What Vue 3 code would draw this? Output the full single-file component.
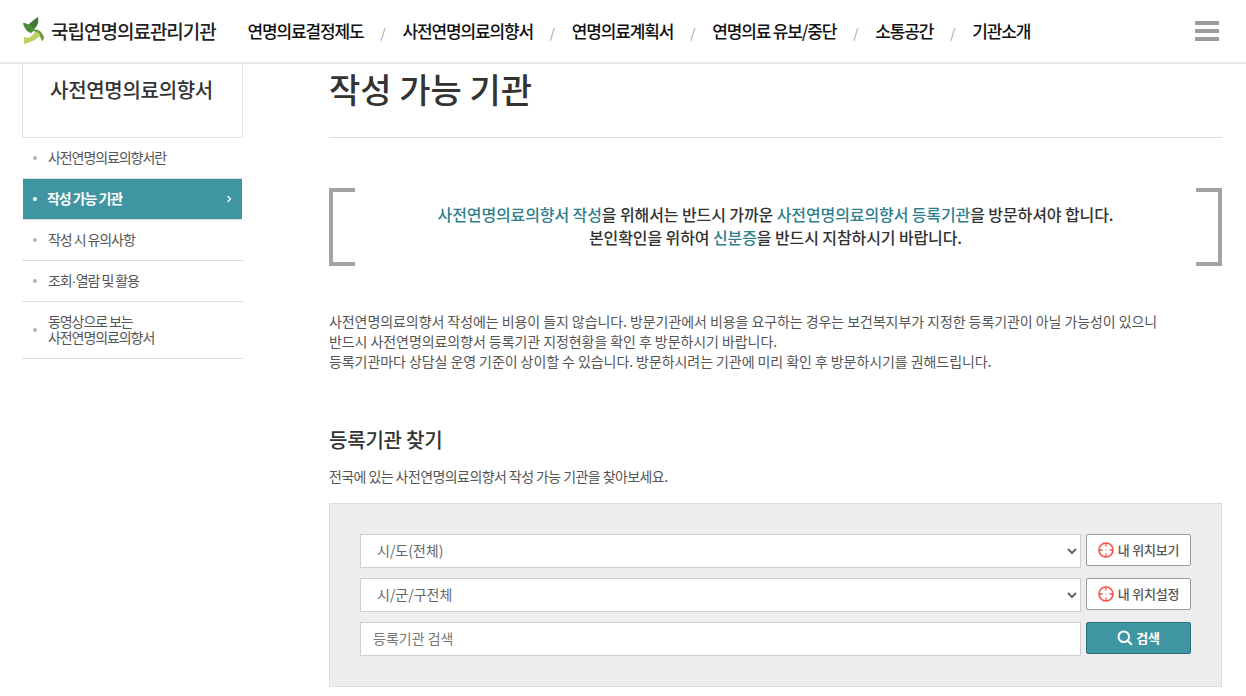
<script setup>
const nav = ['연명의료결정제도', '사전연명의료의향서', '연명의료계획서', '연명의료 유보/중단', '소통공간', '기관소개']
const side = [
  { t: '사전연명의료의향서란' },
  { t: '작성 가능 기관', on: true },
  { t: '작성 시 유의사항' },
  { t: '조회', mid: '·', rest: '열람 및 활용' },
  { t: '동영상으로 보는\n사전연명의료의향서' }
]
</script>

<template>
  <div class="page">
    <header class="hd">
      <div class="logo">
        <svg class="mark" width="22" height="28" viewBox="0 0 22 28">
          <path d="M15 0C16 4 15 9 11 12C9 11 7 10 5 9C7 5 11 3 15 0z" fill="#3f7a35" />
          <path d="M0 6C4 6 9 8 12 13L8 16C4 15 1 11 0 6z" fill="#4f8a3a" />
          <path d="M10 13C14 11 19 14 21 20C21 22 20 24 19 24C18 20 15 17 10 13z" fill="#6f9a3e" />
          <path d="M1 27V20C5 22 9 20 12 15C15 15 17 16 17 18C14 23 8 25 1 27z" fill="#bfd264" />
        </svg>
        <span>국립연명의료관리기관</span>
      </div>
      <nav class="nav">
        <template v-for="(n, i) in nav" :key="n">
          <a>{{ n }}</a>
          <i v-if="i < nav.length - 1">/</i>
        </template>
      </nav>
      <div class="burger"><b></b><b></b><b></b></div>
    </header>

    <div class="body">
      <aside class="side">
        <h2>사전연명의료의향서</h2>
        <ul>
          <li v-for="s in side" :key="s.t" :class="{ on: s.on }">
            <span class="dot"></span>
            <span class="lbl">{{ s.t }}<span v-if="s.mid" class="mid">{{ s.mid }}</span>{{ s.rest }}</span>
            <svg v-if="s.on" class="chev" width="6" height="8" viewBox="0 0 6 8"><path d="M1.5 1l3 3-3 3" fill="none" stroke="#fff" stroke-width="1.3" /></svg>
          </li>
        </ul>
      </aside>

      <main class="main">
        <h1>작성 가능 기관</h1>
        <section class="notice">
          <p><em>사전연명의료의향서 작성</em>을 위해서는 반드시 가까운 <em>사전연명의료의향서 등록기관</em>을 방문하셔야 합니다.</p>
          <p>본인확인을 위하여 <em>신분증</em>을 반드시 지참하시기 바랍니다.</p>
        </section>
        <p class="desc">사전연명의료의향서 작성에는 비용이 들지 않습니다. 방문기관에서 비용을 요구하는 경우는 보건복지부가 지정한 등록기관이 아닐 가능성이 있으니<br>반드시 사전연명의료의향서 등록기관 지정현황을 확인 후 방문하시기 바랍니다.<br>등록기관마다 상담실 운영 기준이 상이할 수 있습니다. 방문하시려는 기관에 미리 확인 후 방문하시기를 권해드립니다.</p>
        <h3>등록기관 찾기</h3>
        <p class="sub">전국에 있는 사전연명의료의향서 작성 가능 기관을 찾아보세요.</p>
        <div class="search">
          <div class="row">
            <select class="field"><option>시/도(전체)</option></select>
            <button class="btn">
              <svg width="16" height="16" viewBox="0 0 16 16"><circle cx="8" cy="8" r="7" fill="none" stroke="#f4524a" stroke-width="1.6" /><path d="M8 1v3.5M8 11.5V15M1 8h3.5M11.5 8H15" stroke="#f4524a" stroke-width="1.3" /><circle cx="8" cy="8" r=".8" fill="#f9a09a" /></svg>
              내 위치보기
            </button>
          </div>
          <div class="row">
            <select class="field"><option>시/군/구전체</option></select>
            <button class="btn">
              <svg width="16" height="16" viewBox="0 0 16 16"><circle cx="8" cy="8" r="7" fill="none" stroke="#f4524a" stroke-width="1.6" /><path d="M8 1v3.5M8 11.5V15M1 8h3.5M11.5 8H15" stroke="#f4524a" stroke-width="1.3" /><circle cx="8" cy="8" r=".8" fill="#f9a09a" /></svg>
              내 위치설정
            </button>
          </div>
          <div class="row">
            <input class="field txt" placeholder="등록기관 검색" />
            <button class="btn go">
              <svg width="16" height="16" viewBox="0 0 16 16"><circle cx="6.8" cy="6.8" r="5.3" fill="none" stroke="#fff" stroke-width="2" /><path d="M10.8 10.8l4 4" stroke="#fff" stroke-width="2.2" /></svg>
              검색
            </button>
          </div>
        </div>
      </main>
    </div>
  </div>
</template>

<style>
html, body { margin: 0; background: #fff; overflow: hidden; }
</style>

<style scoped>
.page { width: 1246px; height: 696px; overflow: hidden; font-family: "Noto Sans CJK KR", "Noto Sans", sans-serif; color: #333; }
.hd { height: 62px; border-bottom: 2px solid #e8e8e8; display: flex; align-items: center; box-sizing: content-box; padding-left: 24px; }
.logo { display: flex; align-items: center; gap: 6px; width: 223.5px; font-size: 19px; font-weight: 500; color: #222; letter-spacing: -1px; margin-bottom: 2px; }
.mark { flex: none; margin-left: -1px; margin-top: 2px; }
.nav { display: flex; align-items: center; font-size: 17px; font-weight: 500; color: #111; letter-spacing: -1.14px; margin-bottom: 2px; }
.nav a { white-space: nowrap; }
.nav i { width: 38.9px; text-align: center; color: #a09a94; font-style: normal; font-size: 13px; font-weight: 400; letter-spacing: 0; margin-top: 4px; }
.burger { margin-left: auto; margin-right: 27px; width: 24px; display: flex; flex-direction: column; gap: 4px; }
.burger b { display: block; height: 4px; background: #9c9c9c; }
.body { display: flex; padding-left: 22px; }
.side { width: 221px; flex: none; }
.side h2 { margin: 0; height: 73px; box-sizing: content-box; border: 1px solid #e2e2e2; border-top: 0; padding-right: 0; text-align: center; font-size: 20px; font-weight: 500; letter-spacing: -0.3px; line-height: 52px; color: #333; text-indent: -2px; }
ul { list-style: none; margin: 0; padding: 0; }
li { display: flex; align-items: center; min-height: 40px; border-bottom: 1px solid #dcdcdc; padding: 0 10px 0 11px; font-size: 14px; letter-spacing: -1.08px; line-height: 16px; color: #555; white-space: pre-line; }
li:last-child { min-height: 56px; }
.lbl { margin-top: -2px; }
.mid { font-family: "Liberation Sans", sans-serif; letter-spacing: -0.5px; }
.dot { width: 4px; height: 4px; border-radius: 50%; background: #b4b4b4; margin-right: 11px; flex: none; }
li.on { background: #3f95a1; color: #fff; font-weight: 700; margin-left: 1px; margin-right: 1px; padding-left: 10px; }
li.on .lbl { margin-left: -1px; }
li.on .dot { background: #fff; }
.chev { margin-left: auto; }
.main { width: 893px; margin-left: 86px; }
h1 { margin: 0; height: 73px; border-bottom: 1px solid #dcdcdc; font-size: 34px; font-weight: 500; letter-spacing: 0; color: #333; line-height: 50px; }
.notice { margin-top: 50px; height: 78px; box-sizing: border-box; padding-bottom: 2px; position: relative; text-align: center; font-size: 16px; font-weight: 500; line-height: 23px; letter-spacing: -0.1px; color: #333; display: flex; flex-direction: column; justify-content: center; }
.notice::before, .notice::after { content: ""; position: absolute; top: 0; bottom: 0; width: 22px; border: 4px solid #a3a3a3; }
.notice::before { left: 0; border-right: 0; }
.notice::after { right: 0; border-left: 0; }
.notice p { margin: 0; }
em { font-style: normal; color: #2f7f8c; }
.desc { margin: 45px 0 0; font-size: 14px; line-height: 20px; letter-spacing: -0.07px; color: #555; }
h3 { margin: 54px 0 0; font-size: 20px; font-weight: 500; letter-spacing: -0.2px; color: #333; line-height: 30px; }
.sub { margin: 11px 0 0; font-size: 14px; letter-spacing: -0.58px; color: #555; line-height: 20px; }
.search { margin-top: 17px; height: 184px; box-sizing: border-box; background: #eee; border: 1px solid #dcdcdc; padding: 30px 30px 0; display: flex; flex-direction: column; gap: 10px; }
.row { display: flex; justify-content: space-between; align-items: flex-start; height: 34px; }
.field { width: 721px; height: 34px; box-sizing: border-box; border: 1px solid #cfcfcf; background: #fff; font-family: inherit; font-size: 14px; color: #666; padding: 0 12px 2px; border-radius: 0; }
.txt { outline: 0; }
.txt::placeholder { color: #777; }
.btn { width: 105px; height: 32px; box-sizing: border-box; border: 1px solid #9a9a9a; border-radius: 2px; background: #fff; font-family: inherit; font-size: 13px; font-weight: 500; color: #555; display: flex; align-items: center; justify-content: center; gap: 4px; padding: 0 0 1px; letter-spacing: -0.2px; }
.go { background: #3f95a1; border-color: #2c6f7a; color: #fff; font-weight: 700; gap: 3px; }
</style>
